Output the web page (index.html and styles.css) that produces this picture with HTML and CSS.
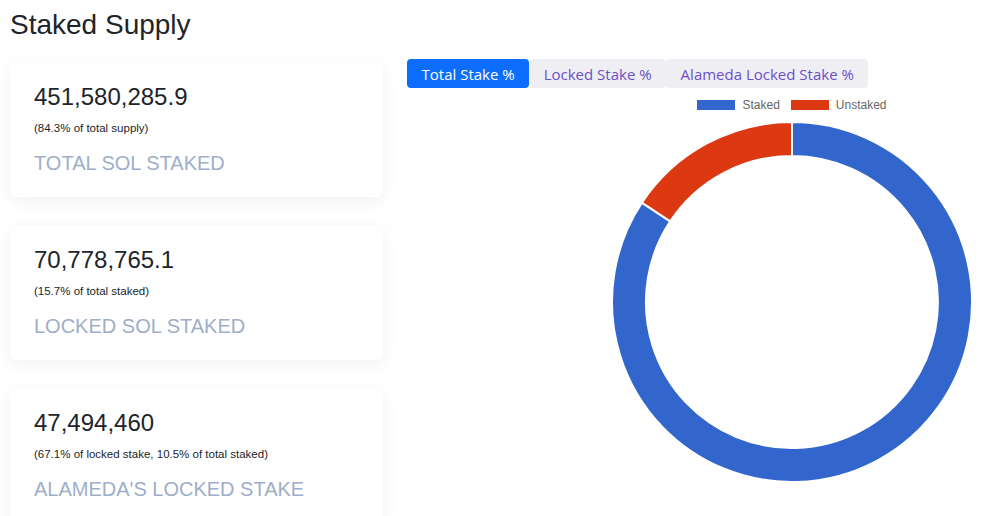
FILE: index.html
```html
<!DOCTYPE html>
<html>
<head>
<meta charset="utf-8">
<link rel="stylesheet" href="styles.css">
</head>
<body>
<div class="page">
  <h1 class="title">Staked Supply</h1>
  <div class="content">
    <div class="cards">
      <div class="card">
        <div class="card-value">451,580,285.9</div>
        <div class="card-sub">(84.3% of total supply)</div>
        <div class="card-label">TOTAL SOL STAKED</div>
      </div>
      <div class="card">
        <div class="card-value">70,778,765.1</div>
        <div class="card-sub">(15.7% of total staked)</div>
        <div class="card-label">LOCKED SOL STAKED</div>
      </div>
      <div class="card">
        <div class="card-value">47,494,460</div>
        <div class="card-sub">(67.1% of locked stake, 10.5% of total staked)</div>
        <div class="card-label">ALAMEDA'S LOCKED STAKE</div>
      </div>
    </div>
    <div class="chart-col">
      <div class="tabs">
        <button class="tab tab-active">Total Stake %</button>
        <button class="tab">Locked Stake %</button>
        <button class="tab">Alameda Locked Stake %</button>
      </div>
      <div class="chart">
        <div class="legend">
          <span class="legend-item"><span class="swatch swatch-blue"></span>Staked</span>
          <span class="legend-item"><span class="swatch swatch-red"></span>Unstaked</span>
        </div>
        <svg class="donut" width="362" height="362" viewBox="0 0 362 362">
          <path d="M181,1 A180,180 0 1 1 30.9,81.7 L59.2,100.4 A146,146 0 1 0 181,35 Z" fill="#3366cc" stroke="#fff" stroke-width="2"/>
          <path d="M30.9,81.7 A180,180 0 0 1 181,1 L181,35 A146,146 0 0 0 59.2,100.4 Z" fill="#dc3912" stroke="#fff" stroke-width="2"/>
        </svg>
      </div>
    </div>
  </div>
</div>
</body>
</html>
```

FILE: styles.css
```css
html, body {
  margin: 0;
  padding: 0;
  background: #ffffff;
}
body {
  font-family: "Liberation Sans", Arial, sans-serif;
  color: #212529;
  overflow: hidden;
}
.page {
  width: 992px;
  height: 516px;
  overflow: hidden;
}
.title {
  margin: 8px 0 0 10px;
  font-size: 28px;
  line-height: 34px;
  font-weight: 400;
  color: #212529;
}
.content {
  display: flex;
  margin-top: 17px;
  padding-left: 10px;
}
.cards {
  width: 373px;
  flex: none;
  display: flex;
  flex-direction: column;
  gap: 29px;
  padding-top: 4px;
}
.card {
  background: #fff;
  border-radius: 6px;
  box-shadow: 0 4px 18px rgba(0, 0, 0, 0.06);
  padding: 20px 24px 23px;
}
.card-value {
  font-size: 24px;
  line-height: 28px;
  color: #212529;
}
.card-sub {
  margin-top: 10px;
  font-size: 11.5px;
  line-height: 14px;
  color: #212529;
}
.card-label {
  margin-top: 17px;
  font-size: 20px;
  line-height: 22px;
  color: #9eaec8;
}
.chart-col {
  flex: 1;
  display: flex;
  flex-direction: column;
  margin-left: 24px;
}
.tabs {
  display: flex;
}
.tab {
  font-family: "Open Sans", "Noto Sans", sans-serif;
  font-size: 15px;
  height: 29px;
  padding: 0 14.5px;
  border: none;
  background: #efeff3;
  color: #6b50c8;
  border-radius: 4px;
  cursor: pointer;
}
.tab-active {
  background: #0d6efd;
  color: #fff;
}
.chart {
  align-self: flex-end;
  width: 400px;
  display: flex;
  flex-direction: column;
  align-items: center;
}
.legend {
  display: flex;
  gap: 11px;
  margin-top: 10px;
  font-size: 12px;
  line-height: 14px;
  color: #666;
}
.legend-item {
  display: flex;
  align-items: center;
  gap: 7px;
}
.swatch {
  display: inline-block;
  width: 38px;
  height: 10px;
}
.swatch-blue { background: #3366cc; }
.swatch-red { background: #dc3912; }
.donut {
  margin-top: 9px;
  display: block;
}
```
